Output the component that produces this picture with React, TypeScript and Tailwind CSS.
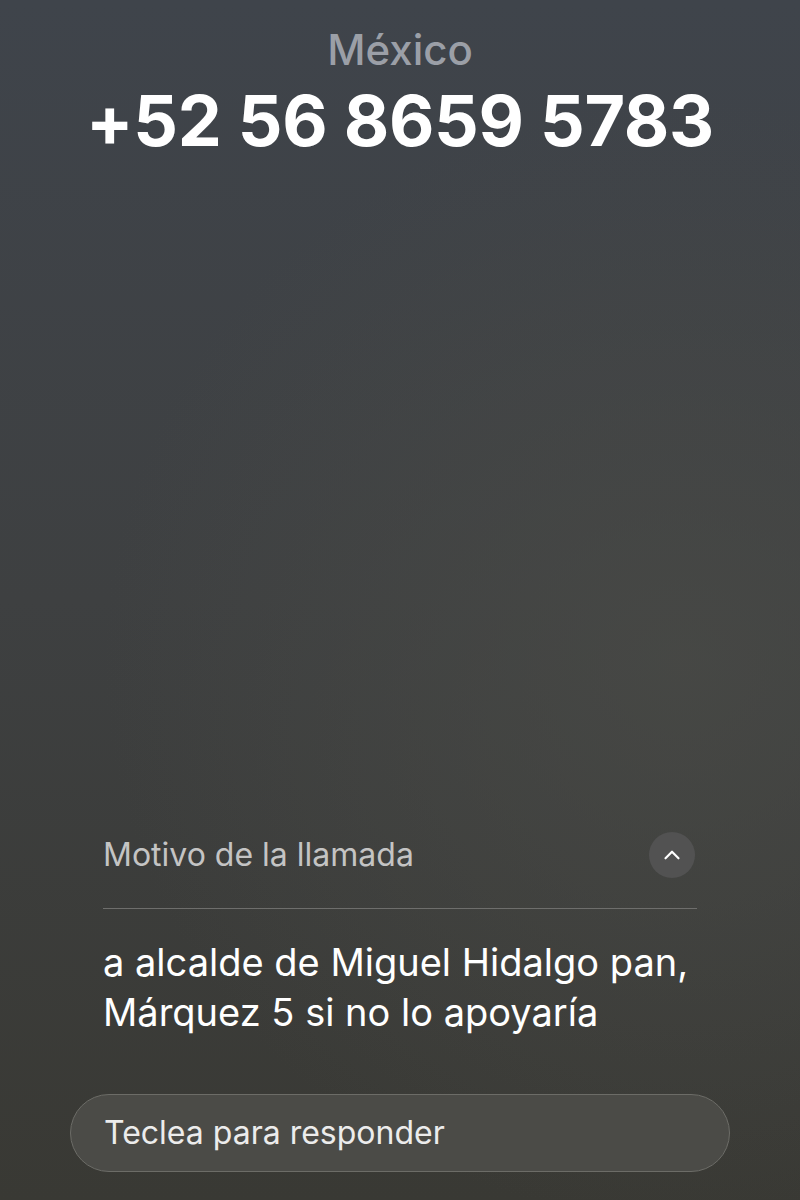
import { ChevronUp } from 'lucide-react'

export default function App() {
	return (
		<div
			className="relative w-[800px] h-[1200px] overflow-hidden flex flex-col bg-gradient-to-b from-[#3f444b] via-[#3e4041] to-[#393934]"
			style={{ fontFamily: 'Inter, "Liberation Sans", sans-serif' }}
		>
			{/* soft light patch on the right, like the blurred wallpaper */}
			<div className="absolute inset-0 bg-radial-[at_85%_55%] from-[#4a4b47]/70 to-transparent to-60% pointer-events-none" />

			{/* Caller header */}
			<div className="relative flex flex-col items-center pt-[23px]">
				<p className="text-[42px] leading-[54px] font-medium text-[#9b9fa7]">México</p>
				<h1 className="text-[70px] leading-[88px] font-bold text-white tracking-[-0.3px]">+52 56 8659 5783</h1>
			</div>

			<div className="flex-1" />

			{/* Call reason */}
			<div className="relative px-[103px]">
				<div className="flex items-center justify-between h-[56px]">
					<p className="text-[32px] text-[#c4c4c4]">Motivo de la llamada</p>
					<div className="w-[46px] h-[46px] rounded-full bg-[#525252] flex items-center justify-center mr-[2px]">
						<ChevronUp className="w-[26px] h-[26px] text-white" strokeWidth={2} />
					</div>
				</div>
				<div className="h-px bg-[#6e6e6c] mt-[25px]" />
				<p className="mt-[28px] text-[38px] leading-[50px] text-white">
					a alcalde de Miguel Hidalgo pan,
					<br />
					Márquez 5 si no lo apoyaría
				</p>
			</div>

			{/* Reply field */}
			<div className="relative px-[70px] pt-[57px] pb-[28px]">
				<div className="h-[78px] rounded-full bg-[#4b4b47] border border-[#6c6c67] flex items-center px-[33px]">
					<span className="text-[32px] text-[#ececec]">Teclea para responder</span>
				</div>
			</div>
		</div>
	)
}
